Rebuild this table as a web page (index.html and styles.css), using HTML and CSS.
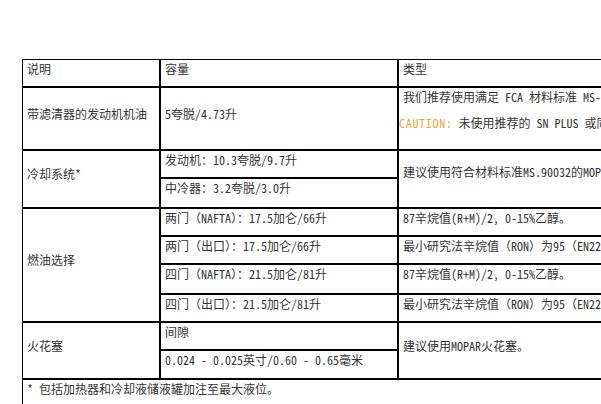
FILE: index.html
```html
<!DOCTYPE html>
<html lang="zh">
<head>
<meta charset="utf-8">
<link rel="stylesheet" href="styles.css">
</head>
<body>
<div class="page">
  <table class="spec">
    <tr class="r28">
      <th class="c1">说明</th>
      <th class="c2">容量</th>
      <th class="c3">类型</th>
    </tr>
    <tr class="r63">
      <td class="mid">带滤清器的发动机机油</td>
      <td class="mid">5夸脱/4.73升</td>
      <td>我们推荐使用满足 FCA 材料标准 MS-6395 的 SAE 0W-20 发动机机油。
        <div class="caution-line"><span class="caution">CAUTION:</span> 未使用推荐的 SN PLUS 或同等机油可能导致发动机损坏。</div>
      </td>
    </tr>
    <tr class="r28">
      <td class="mid" rowspan="2">冷却系统*</td>
      <td>发动机：10.3夸脱/9.7升</td>
      <td rowspan="2" class="mid high">建议使用符合材料标准MS.90032的MOPAR防冻液/冷却液。</td>
    </tr>
    <tr class="r30">
      <td>中冷器：3.2夸脱/3.0升</td>
    </tr>
    <tr class="r27">
      <td class="mid" rowspan="4">燃油选择</td>
      <td>两门（NAFTA）：17.5加仑/66升</td>
      <td>87辛烷值(R+M)/2, 0-15%乙醇。</td>
    </tr>
    <tr class="r28">
      <td>两门（出口）：17.5加仑/66升</td>
      <td>最小研究法辛烷值（RON）为95（EN228）的无铅汽油。</td>
    </tr>
    <tr class="r30">
      <td>四门（NAFTA）：21.5加仑/81升</td>
      <td>87辛烷值(R+M)/2, 0-15%乙醇。</td>
    </tr>
    <tr class="r28">
      <td>四门（出口）：21.5加仑/81升</td>
      <td>最小研究法辛烷值（RON）为95（EN228）的无铅汽油。</td>
    </tr>
    <tr class="r28">
      <td class="mid" rowspan="2">火花塞</td>
      <td>间隙</td>
      <td rowspan="2" class="mid">建议使用MOPAR火花塞。</td>
    </tr>
    <tr class="r29">
      <td>0.024 - 0.025英寸/0.60 - 0.65毫米</td>
    </tr>
    <tr class="r40">
      <td colspan="3">* 包括加热器和冷却液储液罐加注至最大液位。</td>
    </tr>
  </table>
</div>
</body>
</html>
```

FILE: styles.css
```css
html, body {
  margin: 0;
  padding: 0;
  background: #ffffff;
}

.page {
  width: 601px;
  height: 404px;
  overflow: hidden;
  padding: 59px 0 0 22px;
  box-sizing: border-box;
}

.spec {
  border-collapse: separate;
  border-spacing: 0;
  table-layout: fixed;
  width: 796px;
  font-family: "Noto Sans Mono CJK SC", "Noto Sans CJK SC", monospace;
  font-size: 12px;
  line-height: 14px;
  color: #333333;
}

.spec th,
.spec td {
  border: 1px solid #000;
  padding: 2px 4px 10px 4px;
  text-align: left;
  vertical-align: top;
  font-weight: normal;
  white-space: nowrap;
  overflow: hidden;
  box-sizing: border-box;
}

.spec td.mid {
  vertical-align: middle;
  padding-bottom: 12px;
}

.spec td.high {
  padding-bottom: 16px;
}

.c1 { width: 138px; }
.c2 { width: 238px; }
.c3 { width: 420px; }

.r27 { height: 27px; }
.r28 { height: 28px; }
.r29 { height: 29px; }
.r30 { height: 30px; }
.r40 { height: 40px; }
.r63 { height: 63px; }

.caution-line {
  margin-top: 12px;
}

.caution {
  color: #f2a43a;
  letter-spacing: 0.7px;
  margin-left: -4px;
}
```
